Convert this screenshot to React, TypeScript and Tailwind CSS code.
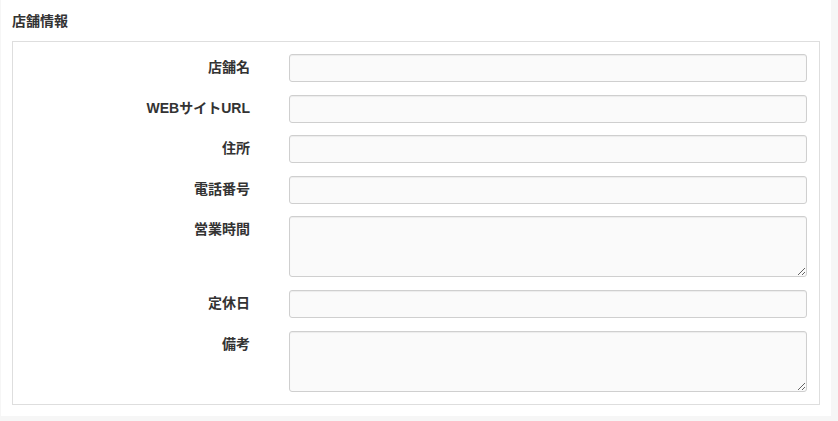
import React from 'react';

type Field = { label: string; multiline?: boolean };

const fields: Field[] = [
    { label: '店舗名' },
    { label: 'WEBサイトURL' },
    { label: '住所' },
    { label: '電話番号' },
    { label: '営業時間', multiline: true },
    { label: '定休日' },
    { label: '備考', multiline: true },
];

const inputCls = 'w-full rounded-[3px] border border-[#cfcfcf] bg-[#fafafa] shadow-[inset_0_1px_1px_rgba(0,0,0,0.06)] outline-none block';

const App: React.FC = () => {
    return (
        <div className="w-[838px] h-[421px] bg-[#f6f6f6] pl-[1px]" style={{ fontFamily: '"Liberation Sans", "Noto Sans CJK JP", sans-serif' }}>
            {/* Card */}
            <div className="w-[830px] h-[416px] bg-white px-[11px] pb-3">
                <h2 className="pt-[12px] pb-[10px] text-[14px] leading-[19px] font-bold text-[#333]">店舗情報</h2>
                <div className="border border-[#dedede] px-3 pt-3 pb-3">
                    <div className="grid grid-cols-[225px_1fr] gap-x-[39px] gap-y-[12.6px]">
                        {fields.map(f => (
                            <React.Fragment key={f.label}>
                                <label className="text-right text-[14px] leading-[20px] font-bold text-[#333] pt-[3px]">{f.label}</label>
                                {f.multiline ? (
                                    <textarea className={`${inputCls} h-[61px]`} />
                                ) : (
                                    <input type="text" className={`${inputCls} h-[28px]`} />
                                )}
                            </React.Fragment>
                        ))}
                    </div>
                </div>
            </div>
        </div>
    );
};

export default App;
